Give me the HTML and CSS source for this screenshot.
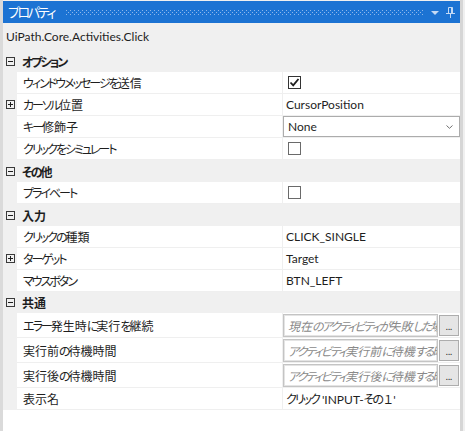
FILE: index.html
```html
<!DOCTYPE html>
<html lang="ja">
<head>
<meta charset="utf-8">
<link rel="stylesheet" href="styles.css">
</head>
<body>
<div class="window">
  <div class="titlebar">
    <span class="title">プロパティ</span>
    <svg class="grip" height="5"><defs><pattern id="dots" width="4" height="4" patternUnits="userSpaceOnUse"><rect x="0" y="0" width="1" height="1" fill="#8db7ea"/><rect x="2" y="2" width="1" height="1" fill="#8db7ea"/></pattern></defs><rect x="0" y="0" width="100%" height="5" fill="url(#dots)"/></svg>
    <svg class="tri" width="8" height="5" viewBox="0 0 8 5"><polygon points="0,0 8,0 4,4" fill="#c3d9f4"/></svg>
    <svg class="pin" width="9" height="11" viewBox="0 0 9 11"><path d="M2.5 0.5 H6.5 V6.5 H2.5 Z" fill="none" stroke="#c3d9f4"/><rect x="5" y="0.5" width="1.5" height="6" fill="#c3d9f4"/><rect x="0" y="6" width="9" height="1" fill="#c3d9f4"/><rect x="4" y="7" width="1" height="4" fill="#c3d9f4"/></svg>
  </div>
  <div class="typename">UiPath.Core.Activities.Click</div>
  <div class="grid">
    <div class="cat"><span class="exp"><span class="h"></span></span><span class="catname"><span class="k">オプション</span></span></div>
    <div class="row">
      <div class="gutter"></div>
      <div class="name"><span class="k">ウィンドウメッセージを</span>送信</div>
      <div class="value"><span class="check on"><svg width="11" height="11" viewBox="0 0 11 11"><path d="M1.5 5.5 L4.2 8.3 L9.5 2" fill="none" stroke="#1e1e1e" stroke-width="1.8"/></svg></span></div>
    </div>
    <div class="row">
      <div class="gutter"><span class="exp"><span class="h"></span><span class="v"></span></span></div>
      <div class="name"><span class="k">カーソル</span>位置</div>
      <div class="value"><span class="text">CursorPosition</span></div>
    </div>
    <div class="row">
      <div class="gutter"></div>
      <div class="name"><span class="k">キー</span>修飾子</div>
      <div class="value"><div class="combo"><span class="text">None</span><svg width="7" height="4" viewBox="0 0 7 4"><path d="M0.5 0.5 L3.5 3.3 L6.5 0.5" fill="none" stroke="#707070"/></svg></div></div>
    </div>
    <div class="row">
      <div class="gutter"></div>
      <div class="name"><span class="k">クリックをシミュレート</span></div>
      <div class="value"><span class="check"></span></div>
    </div>
    <div class="cat"><span class="exp"><span class="h"></span></span><span class="catname"><span class="k">その</span>他</span></div>
    <div class="row">
      <div class="gutter"></div>
      <div class="name"><span class="k">プライベート</span></div>
      <div class="value"><span class="check"></span></div>
    </div>
    <div class="cat"><span class="exp"><span class="h"></span></span><span class="catname">入力</span></div>
    <div class="row">
      <div class="gutter"></div>
      <div class="name"><span class="k">クリックの</span>種類</div>
      <div class="value"><span class="text">CLICK_SINGLE</span></div>
    </div>
    <div class="row">
      <div class="gutter"><span class="exp"><span class="h"></span><span class="v"></span></span></div>
      <div class="name"><span class="k">ターゲット</span></div>
      <div class="value"><span class="text">Target</span></div>
    </div>
    <div class="row">
      <div class="gutter"></div>
      <div class="name"><span class="k">マウスボタン</span></div>
      <div class="value"><span class="text">BTN_LEFT</span></div>
    </div>
    <div class="cat last"><span class="exp"><span class="h"></span></span><span class="catname">共通</span></div>
    <div class="row tall">
      <div class="gutter"></div>
      <div class="name"><span class="k">エラー</span>発生時<span class="k">に</span>実行<span class="k">を</span>継続</div>
      <div class="value"><div class="tbox">現在<span class="k">のアクティビティが</span>失敗<span class="k">した</span>場合</div><div class="btn">...</div></div>
    </div>
    <div class="row tall">
      <div class="gutter"></div>
      <div class="name">実行前<span class="k">の</span>待機時間</div>
      <div class="value"><div class="tbox"><span class="k">アクティビティ</span>実行前<span class="k">に</span>待機<span class="k">する</span>時間</div><div class="btn">...</div></div>
    </div>
    <div class="row tall">
      <div class="gutter"></div>
      <div class="name">実行後<span class="k">の</span>待機時間</div>
      <div class="value"><div class="tbox"><span class="k">アクティビティ</span>実行後<span class="k">に</span>待機<span class="k">する</span>時間</div><div class="btn">...</div></div>
    </div>
    <div class="row">
      <div class="gutter"></div>
      <div class="name">表示名</div>
      <div class="value"><span class="text"><span class="k">クリック</span> 'INPUT-<span class="k">その</span><span class="fw">１</span>'</span></div>
    </div>
    <div class="filler"></div>
  </div>
</div>
</body>
</html>
```

FILE: styles.css
```css
* { box-sizing: border-box; }

body {
  margin: 0;
  width: 465px;
  height: 431px;
  overflow: hidden;
  background: #f0f0f0;
  font-family: "Lato", "Noto Sans CJK JP", sans-serif;
  font-size: 12px;
  color: #1e1e1e;
  font-feature-settings: "palt";
}

.k {
  letter-spacing: -2px;
}

.fw {
  font-family: "Noto Sans CJK JP", sans-serif;
  font-feature-settings: normal;
  letter-spacing: -1px;
}

.window {
  width: 463px;
  height: 431px;
  padding-top: 1px;
  border-left: 3px solid #dadada;
  border-right: 3px solid #d6d6d6;
  display: flex;
  flex-direction: column;
}

.titlebar {
  height: 22px;
  background: #1c73d3;
  display: flex;
  align-items: center;
  padding: 0 5px 0 5px;
  flex-shrink: 0;
}

.title {
  color: #ffffff;
  font-family: "Noto Sans CJK JP", sans-serif;
  font-size: 13px;
  letter-spacing: -2.4px;
  line-height: 22px;
}

.grip {
  flex: 1;
  margin: 1px 8px 0 12px;
  display: block;
}

.tri { display: block; margin-top: 2px; }
.pin { display: block; margin-left: 7px; }

.typename {
  height: 27px;
  line-height: 27px;
  padding-left: 3px;
  background: #f0f0f0;
  flex-shrink: 0;
}

.grid {
  flex: 1;
  display: flex;
  flex-direction: column;
  background: #ffffff;
}

.cat {
  height: 22px;
  background: #f0f0f0;
  display: flex;
  align-items: center;
  padding-left: 3px;
}
.cat.last { height: 21px; }

.catname {
  margin-left: 7px;
  font-weight: bold;
  font-family: "Noto Sans CJK JP", sans-serif;
}

.exp {
  position: relative;
  width: 9px;
  height: 9px;
  border: 1px solid #3a3a3a;
  display: block;
  flex-shrink: 0;
}
.exp .h {
  position: absolute;
  left: 1px;
  top: 3px;
  width: 5px;
  height: 1px;
  background: #1e1e1e;
}
.exp .v {
  position: absolute;
  left: 3px;
  top: 1px;
  width: 1px;
  height: 5px;
  background: #1e1e1e;
}

.row {
  height: 22px;
  display: flex;
}
.row.tall { height: 25px; }

.gutter {
  width: 14px;
  background: #f0f0f0;
  display: flex;
  align-items: center;
  padding-left: 3px;
  padding-bottom: 1px;
}

.name {
  width: 266px;
  border-right: 1px solid #efefef;
  border-bottom: 1px solid #efefef;
  padding-left: 6px;
  display: flex;
  align-items: center;
  white-space: nowrap;
  font-family: "Noto Sans CJK JP", sans-serif;
}

.value {
  flex: 1;
  min-width: 0;
  border-bottom: 1px solid #efefef;
  display: flex;
  align-items: center;
}

.text {
  padding-left: 3px;
  white-space: nowrap;
}

.check {
  margin-left: 5px;
  width: 13px;
  height: 13px;
  border: 1px solid #6a6a6a;
  background: #ffffff;
  display: flex;
  align-items: center;
  justify-content: center;
}
.check.on { border-color: #333333; }
.check svg { display: block; }

.combo {
  flex: 1;
  height: 100%;
  border: 1px solid #acacac;
  display: flex;
  align-items: center;
  justify-content: space-between;
  padding-right: 6px;
}
.combo .text { padding-left: 4px; }

.tbox {
  width: 155px;
  height: 23px;
  border: 1px solid #c4c4c4;
  box-shadow: inset 0 0 0 1px #e4e4e4;
  padding: 0 4px;
  line-height: 21px;
  color: #8a8a8a;
  font-style: italic;
  white-space: nowrap;
  overflow: hidden;
  font-family: "Noto Sans CJK JP", sans-serif;
}

.btn {
  width: 20px;
  height: 21px;
  margin-left: 1px;
  border: 1px solid #adadad;
  background: #e5e5e5;
  font-size: 9px;
  line-height: 22px;
  text-align: center;
  color: #1e1e1e;
  overflow: hidden;
}

.filler {
  flex: 1;
  background: #ffffff;
}
```
